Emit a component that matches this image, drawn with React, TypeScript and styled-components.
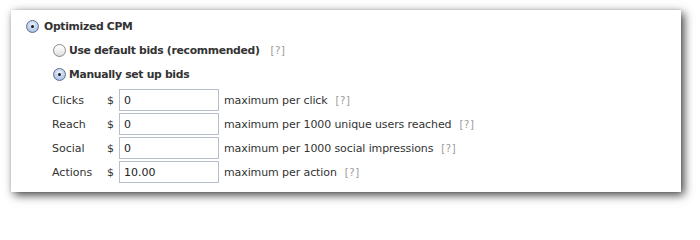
import React from 'react';
import styled, { createGlobalStyle, css } from 'styled-components';

const GlobalStyle = createGlobalStyle`
  html, body {
    margin: 0;
    padding: 0;
    background: #ffffff;
  }
  body {
    font-family: "DejaVu Sans", "Liberation Sans", sans-serif;
    font-size: 11px;
    color: #333333;
  }
`;

const Page = styled.div`
  width: 700px;
  height: 211px;
  padding: 10px 0 0 11px;
  box-sizing: border-box;
`;

const Panel = styled.div`
  width: 670px;
  height: 182px;
  box-sizing: border-box;
  background: #ffffff;
  box-shadow: 3px 3px 9px rgba(0, 0, 0, 0.75), 0 0 2px rgba(0, 0, 0, 0.1);
  padding: 6px 0 0 15px;
  display: flex;
  flex-direction: column;
`;

const OptionRow = styled.label<{ $indent?: number; $gap?: number }>`
  display: flex;
  align-items: center;
  height: 20px;
  margin-left: ${p => p.$indent ?? 0}px;
  margin-bottom: 4px;
  gap: ${p => p.$gap ?? 5}px;
  font-weight: bold;
  font-size: 10.8px;
  letter-spacing: -0.3px;
  color: #333333;
`;

const Radio = styled.span<{ $checked?: boolean }>`
  position: relative;
  width: 13px;
  height: 13px;
  border-radius: 50%;
  box-sizing: border-box;
  flex-shrink: 0;
  border: 1px solid #8a8a8a;
  ${p =>
    p.$checked
      ? css`
          border-color: #5b6f8f;
          background: radial-gradient(circle at 50% 35%, #eaf2fc 0%, #b9cde8 60%, #8fadd6 100%);
          &::after {
            content: '';
            position: absolute;
            left: 4px;
            top: 4px;
            width: 3px;
            height: 3px;
            border-radius: 50%;
            background: #1c1c1c;
          }
        `
      : css`
          background: linear-gradient(#ffffff 0%, #f1f1f1 50%, #dcdcdc 100%);
        `}
`;

const Help = styled.span`
  font-weight: normal;
  font-size: 10px;
  color: #9a9a9a;
  margin-left: 8px;
  letter-spacing: 0.6px;
`;

const BidTable = styled.div`
  display: grid;
  grid-template-columns: 55px 12px 100px auto;
  grid-auto-rows: 22px;
  row-gap: 2px;
  align-items: center;
  margin-left: 26px;
  margin-top: 1px;
`;

const BidLabel = styled.span`
  color: #333333;
`;

const Dollar = styled.span`
  color: #333333;
`;

const BidInput = styled.input`
  width: 100px;
  height: 22px;
  box-sizing: border-box;
  border: 1px solid #b7bfcf;
  padding: 0 4px;
  font-family: "DejaVu Sans", "Liberation Sans", sans-serif;
  font-size: 11px;
  color: #222222;
  outline: none;
`;

const BidNote = styled.span`
  margin-left: 5px;
  color: #333333;
  white-space: nowrap;
  letter-spacing: -0.1px;
`;

const bids = [
  { label: 'Clicks', value: '0', note: 'maximum per click' },
  { label: 'Reach', value: '0', note: 'maximum per 1000 unique users reached' },
  { label: 'Social', value: '0', note: 'maximum per 1000 social impressions' },
  { label: 'Actions', value: '10.00', note: 'maximum per action' },
];

export default function App() {
  return (
    <>
      <GlobalStyle />
      <Page>
        <Panel>
          <OptionRow>
            <Radio $checked />
            Optimized CPM
          </OptionRow>
          <OptionRow $indent={27} $gap={3}>
            <Radio />
            Use default bids (recommended)
            <Help>[?]</Help>
          </OptionRow>
          <OptionRow $indent={27} $gap={3}>
            <Radio $checked />
            Manually set up bids
          </OptionRow>
          <BidTable>
            {bids.map(b => (
              <React.Fragment key={b.label}>
                <BidLabel>{b.label}</BidLabel>
                <Dollar>$</Dollar>
                <BidInput defaultValue={b.value} />
                <BidNote>
                  {b.note}
                  <Help>[?]</Help>
                </BidNote>
              </React.Fragment>
            ))}
          </BidTable>
        </Panel>
      </Page>
    </>
  );
}
